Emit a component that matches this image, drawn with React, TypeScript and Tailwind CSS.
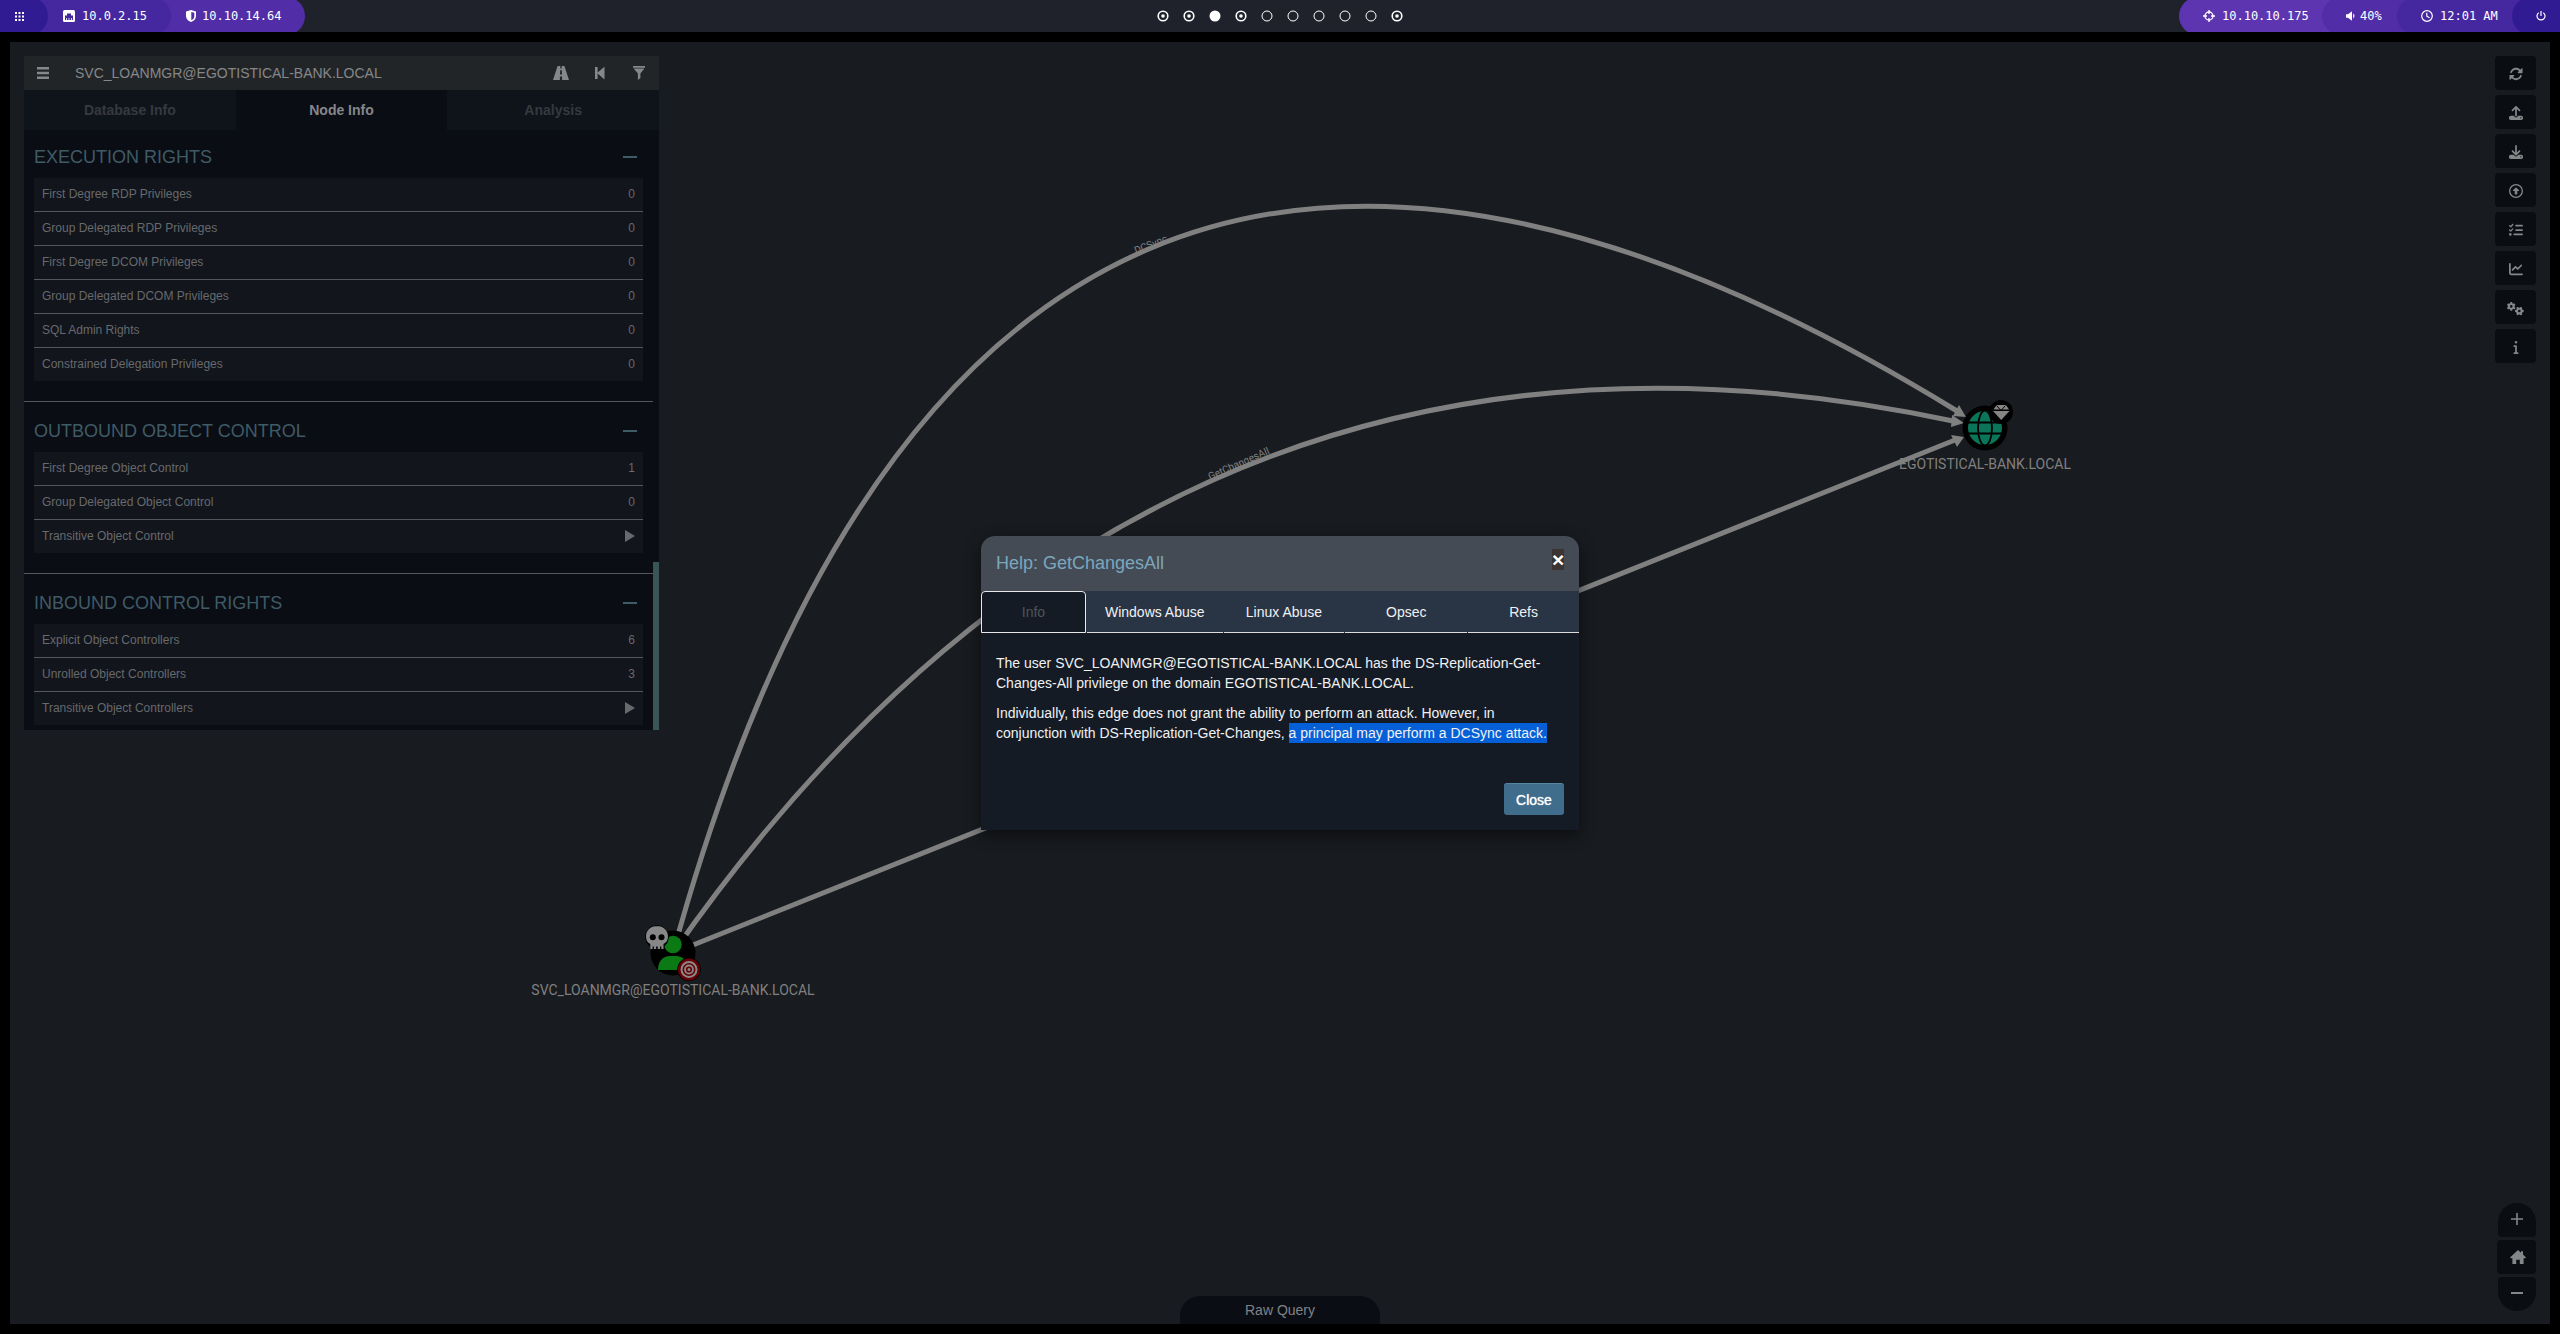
import React, { useState } from 'react';
import {
  FaRotate,
  FaUpload,
  FaDownload,
  FaRegCircleUp,
  FaListCheck,
  FaChartLine,
  FaGears,
  FaInfo,
} from 'react-icons/fa6';

/* ---------- icons ---------- */

const MenuIcon = () => (
  <svg className="h-3 w-3" viewBox="0 0 12 12" fill="currentColor" aria-hidden="true">
    <path d="M0 0h12v2.5H0zM0 4.8h12v2.5H0zM0 9.5h12V12H0z" />
  </svg>
);
const RoadIcon = () => (
  <svg className="h-3.5 w-4" viewBox="0 0 16 14" fill="currentColor" aria-hidden="true">
    <path d="M4.6 0H7.3V2.6H8.7V0H11.4L16 14H9.1V10.6H6.9V14H0ZM7.2 4.3 7 8.4H9L8.8 4.3Z" />
  </svg>
);
const StepBackIcon = () => (
  <svg className="h-3.5 w-2.5" viewBox="0 0 10 14" fill="currentColor" aria-hidden="true">
    <path d="M0 1h2.6v5.6L9.5 0.8v12.6L2.6 7.4V13H0z" />
  </svg>
);
const FilterIcon = () => (
  <svg className="h-3.5 w-3" viewBox="0 0 12 14" fill="currentColor" aria-hidden="true">
    <path d="M0 0h12v1.8H0zM0.6 2.4h10.8L7.4 7.4V12L4.9 14V7.4z" />
  </svg>
);
const HomeIcon = () => (
  <svg className="h-3.5 w-4" viewBox="0 0 16 14" fill="currentColor" aria-hidden="true">
    <path d="M8 0 11 2.7V1.2h2v3.3L16 7.4l-.8.9H13.6V14H9.8V9.8H6.2V14H2.4V8.3H.8L0 7.4Z" />
  </svg>
);
const EthernetIcon = () => (
  <svg className="h-3 w-3" viewBox="0 0 12 12" aria-hidden="true">
    <rect width="12" height="12" rx="1.5" fill="#fff" />
    <path d="M2 10V5.5h2V3.5h4v2h2V10H8.8V8H8v2H6.4V8h-.8v2H4V8h-.8v2z" fill="#4527a0" />
  </svg>
);
const ShieldIcon = () => (
  <svg className="h-3 w-2.5" viewBox="0 0 10 12" aria-hidden="true">
    <path d="M5 0 10 1.5V6c0 3-2 5-5 6-3-1-5-3-5-6V1.5z" fill="#fff" />
    <path d="M5.3 2 8.3 2.8V6c0 2-1 3.4-3 4.2z" fill="#512da8" />
  </svg>
);
const TargetIcon = () => (
  <svg className="h-3 w-3" viewBox="0 0 12 12" fill="none" stroke="#fff" strokeWidth="1.3" aria-hidden="true">
    <circle cx="6" cy="6" r="4" />
    <path d="M6 0v4M6 8v4M0 6h4M8 6h4" />
  </svg>
);
const VolumeIcon = () => (
  <svg className="h-2.5 w-2.5" viewBox="0 0 10 10" fill="#fff" aria-hidden="true">
    <path d="M0 3.2h2L6 .2v9.6L2 6.8H0zM7.2 2.6C9 3.6 9 6.4 7.2 7.4z" />
  </svg>
);
const ClockIcon = () => (
  <svg className="h-3 w-3" viewBox="0 0 12 12" fill="none" stroke="#fff" strokeWidth="1.2" aria-hidden="true">
    <circle cx="6" cy="6" r="5.3" />
    <path d="M5.8 2.8V6.2L8.6 7.8" />
  </svg>
);
const PowerIcon = () => (
  <svg className="h-2.5 w-2.5" viewBox="0 0 10 10" fill="none" stroke="#fff" strokeWidth="1.2" aria-hidden="true">
    <path d="M5 0v5M2.7 1.7a4 4 0 1 0 4.6 0" />
  </svg>
);
const GridIcon = () => (
  <svg className="h-[9px] w-[9px]" viewBox="0 0 9 9" fill="#fff" aria-hidden="true">
    {[0, 3.5, 7].map((y) => [0, 3.5, 7].map((x) => <rect key={`${x}-${y}`} x={x} y={y} width="2" height="2" />))}
  </svg>
);

/* ---------- status bar ---------- */

const workspaces = ['busy', 'busy', 'active', 'busy', 'empty', 'empty', 'empty', 'empty', 'empty', 'busy'];

function Workspace({ state, index }: { state: string; index: number }) {
  return (
    <button aria-label={`Workspace ${index + 1}`} className="grid h-[26px] w-[26px] place-items-center">
      <svg className="h-3 w-3" viewBox="0 0 12 12" fill="none" stroke="#fff" aria-hidden="true">
        {state === 'active' && <circle cx="6" cy="6" r="5.5" fill="#fff" stroke="none" />}
        {state === 'busy' && (
          <>
            <circle cx="6" cy="6" r="4.8" strokeWidth="1.6" />
            <circle cx="6" cy="6" r="1.8" fill="#fff" stroke="none" />
          </>
        )}
        {state === 'empty' && <circle cx="6" cy="6" r="5" strokeWidth="1" />}
      </svg>
    </button>
  );
}

function StatusBar() {
  return (
    <header className="grid h-8 grid-cols-[1fr_auto_1fr] grid-rows-[32px] items-center overflow-hidden bg-[#1f222b] font-['DejaVu_Sans_Mono',monospace] text-xs text-white">
      <div className="flex items-center">
        <div className="flex h-[38px] items-center rounded-r-[19px] bg-[#512da8]">
          <div className="flex h-[38px] items-center rounded-r-[19px] bg-[#4527a0]">
            <div className="flex h-[38px] w-12 items-center rounded-r-[19px] bg-[#311b92] pl-[15px]">
              <GridIcon />
            </div>
            <div className="flex w-[123px] items-center gap-[7px] pl-[15px]">
              <EthernetIcon />
              <span>10.0.2.15</span>
            </div>
          </div>
          <div className="flex w-[134px] items-center gap-1.5 pl-[15px]">
            <ShieldIcon />
            <span>10.10.14.64</span>
          </div>
        </div>
      </div>
      <nav aria-label="Workspaces" className="flex">
        {workspaces.map((s, i) => (
          <Workspace key={i} state={s} index={i} />
        ))}
      </nav>
      <div className="flex items-center justify-end">
        <div className="flex h-[38px] items-center rounded-l-[19px] bg-[#5e35b1]">
          <div className="flex w-[143px] items-center gap-[7px] pl-6">
            <TargetIcon />
            <span>10.10.10.175</span>
          </div>
          <div className="flex h-[38px] items-center rounded-l-[19px] bg-[#512da8]">
            <div className="flex w-[75px] items-center gap-1 pl-6">
              <VolumeIcon />
              <span>40%</span>
            </div>
            <div className="flex h-[38px] items-center rounded-l-[19px] bg-[#4527a0]">
              <div className="flex w-[115px] items-center gap-[7px] pl-6">
                <ClockIcon />
                <span>12:01 AM</span>
              </div>
              <div className="flex h-[38px] w-12 items-center rounded-l-[19px] bg-[#311b92] pl-6">
                <PowerIcon />
              </div>
            </div>
          </div>
        </div>
      </div>
    </header>
  );
}

/* ---------- graph ---------- */

function Graph() {
  return (
    <svg
      className="absolute inset-0 h-full w-full"
      viewBox="10 42 2540 1282"
      role="img"
      aria-label="Attack path graph"
      fontFamily="Roboto, sans-serif"
    >
      <g fill="#808284" fontSize="10">
        <text transform="translate(1136 254) rotate(-22)">DCSync</text>
        <text transform="translate(1210 480) rotate(-24)">GetChangesAll</text>
      </g>
      <g fill="none" stroke="#808080" strokeWidth="5">
        <path d="M673 953Q985 -185 1957 411" />
        <path d="M673 953Q1162 252 1953 421" />
        <path d="M673 953 1955 440" />
      </g>
      <g fill="#808080">
        <path d="M1959 405 1953 416 1966 417z" />
        <path d="M1952 415 1951 427 1964 423z" />
        <path d="M1951 435 1957 447 1964 437z" />
      </g>

      <g>
        <circle cx="673" cy="953" r="22.5" fill="#000" />
        <circle cx="673" cy="944.5" r="8.7" fill="#0c7a14" />
        <path d="M658 970c0-9 5-14 12-14h6c7 0 12 5 12 14z" fill="#0c7a14" />
        <circle cx="657" cy="937" r="11.8" fill="#000" />
        <path
          d="M657 926c-6.5 0-11 4.6-11 10.4 0 3.6 1.5 6.2 4.3 7.6V949h2.3v-2.5h1.3V949h2.2v-2.5h1.6V949h2.3v-2.5h1.3V949h2.2V944c2.9-1.4 4.5-4 4.5-7.6 0-5.8-4.5-10.4-11-10.4z"
          fill="#878787"
        />
        <circle cx="652.8" cy="937.3" r="3" fill="#000" />
        <circle cx="661.5" cy="937.3" r="3" fill="#000" />
        <circle cx="689" cy="969.5" r="11.8" fill="#000" />
        <circle cx="689" cy="969.5" r="11" fill="#640006" />
        <circle cx="689" cy="969.5" r="7.5" fill="none" stroke="#8c8888" strokeWidth="2" />
        <circle cx="689" cy="969.5" r="4" fill="none" stroke="#8c8888" strokeWidth="1.8" />
        <circle cx="689" cy="969.5" r="1.5" fill="#8c8888" />
        <text x="673" y="995" textAnchor="middle" fontSize="14" fill="#808080">
          SVC_LOANMGR@EGOTISTICAL-BANK.LOCAL
        </text>
      </g>

      <g>
        <circle cx="1985" cy="428" r="22.5" fill="#000" />
        <circle cx="1985" cy="428" r="17" fill="#0b755a" />
        <g fill="none" stroke="#000" strokeWidth="1.8">
          <ellipse cx="1985" cy="428" rx="7" ry="17.5" />
          <path d="M1967 422.5h36M1967 433.5h36" />
        </g>
        <circle cx="2001" cy="412" r="12" fill="#000" />
        <path d="M1996.5 405h9.5l3 4.5h-15.5zM1993 411h16.5l-8.3 9z" fill="#858585" />
        <path d="M1996.5 405.5 2001 410.5 2005.5 405.5" fill="none" stroke="#000" strokeWidth="1" />
        <text x="1985" y="469" textAnchor="middle" fontSize="14" fill="#808080">
          EGOTISTICAL-BANK.LOCAL
        </text>
      </g>
    </svg>
  );
}

/* ---------- left panel ---------- */

type Row = { label: string; value: string | null };
const sections: { title: string; rows: Row[] }[] = [
  {
    title: 'EXECUTION RIGHTS',
    rows: [
      { label: 'First Degree RDP Privileges', value: '0' },
      { label: 'Group Delegated RDP Privileges', value: '0' },
      { label: 'First Degree DCOM Privileges', value: '0' },
      { label: 'Group Delegated DCOM Privileges', value: '0' },
      { label: 'SQL Admin Rights', value: '0' },
      { label: 'Constrained Delegation Privileges', value: '0' },
    ],
  },
  {
    title: 'OUTBOUND OBJECT CONTROL',
    rows: [
      { label: 'First Degree Object Control', value: '1' },
      { label: 'Group Delegated Object Control', value: '0' },
      { label: 'Transitive Object Control', value: null },
    ],
  },
  {
    title: 'INBOUND CONTROL RIGHTS',
    rows: [
      { label: 'Explicit Object Controllers', value: '6' },
      { label: 'Unrolled Object Controllers', value: '3' },
      { label: 'Transitive Object Controllers', value: null },
    ],
  },
];

function Section({ title, rows }: { title: string; rows: Row[] }) {
  return (
    <section className="border-b border-[#55585a] px-2.5 pb-5 last:border-b-0 last:pb-[5px]">
      <div className="flex h-[50px] items-center justify-between pr-1.5 pt-2">
        <h2 className="text-lg leading-5 text-[#3f5b66]">{title}</h2>
        <button aria-label={`Collapse ${title}`} className="grid h-5 w-3.5 place-items-center">
          <span className="h-0.5 w-3.5 bg-[#3f5b66]" />
        </button>
      </div>
      <table className="w-full border-separate border-spacing-0 text-xs text-[#67696c]">
        <tbody>
          {rows.map((r) => (
            <tr
              key={r.label}
              className="h-[34px] bg-[#12151c] last:h-[33px] [&:not(:last-child)>td]:border-b [&:not(:last-child)>td]:border-[#55585a]"
            >
              <td className="p-0 pb-0.5 pl-2">{r.label}</td>
              <td className="p-0 pb-0.5 pr-2 text-right">
                {r.value ?? (
                  <button aria-label={`Run ${r.label}`} className="ml-auto block">
                    <svg className="h-3 w-2.5" viewBox="0 0 10 12" fill="#67696c" aria-hidden="true">
                      <path d="M0 0 10 6 0 12z" />
                    </svg>
                  </button>
                )}
              </td>
            </tr>
          ))}
        </tbody>
      </table>
    </section>
  );
}

function SidePanel() {
  const tabs = ['Database Info', 'Node Info', 'Analysis'];
  const [tab, setTab] = useState('Node Info');
  return (
    <aside className="relative w-[calc(25%+7px)] self-start bg-[#0a0d14]">
      <div className="flex h-[34px] items-center bg-[#222527] text-[#85878a]">
        <button aria-label="Menu" className="ml-[13px]">
          <MenuIcon />
        </button>
        <input
          aria-label="Search for a node"
          defaultValue="SVC_LOANMGR@EGOTISTICAL-BANK.LOCAL"
          className="ml-[26px] h-full min-w-0 flex-1 bg-transparent text-sm outline-none"
        />
        <div className="flex items-center pr-3.5">
          <button aria-label="Pathfinding" className="mr-[26px]">
            <RoadIcon />
          </button>
          <button aria-label="Back" className="mr-7">
            <StepBackIcon />
          </button>
          <button aria-label="Filter">
            <FilterIcon />
          </button>
        </div>
      </div>
      <div role="tablist" className="grid h-10 grid-cols-3">
        {tabs.map((t) => (
          <button
            key={t}
            role="tab"
            aria-selected={t === tab}
            onClick={() => setTab(t)}
            className={
              t === tab
                ? 'text-sm font-bold text-[#85878a]'
                : 'bg-[#0f141b] text-sm font-bold text-[#36393e]'
            }
          >
            {t}
          </button>
        ))}
      </div>
      <div className="-mt-0.5 mr-1.5">
        {sections.map((s) => (
          <Section key={s.title} {...s} />
        ))}
      </div>
      <div className="absolute bottom-0 right-0 h-1/4 w-1.5 bg-[#3a5558]" />
    </aside>
  );
}

/* ---------- right toolbar ---------- */

const tools = [
  { name: 'Refresh', icon: <FaRotate size={14} /> },
  { name: 'Export graph', icon: <FaUpload size={14} /> },
  { name: 'Import graph', icon: <FaDownload size={14} /> },
  { name: 'Upload data', icon: <FaRegCircleUp size={14} /> },
  { name: 'View upload status', icon: <FaListCheck size={14} /> },
  { name: 'Change layout', icon: <FaChartLine size={14} /> },
  { name: 'Settings', icon: <FaGears size={17} /> },
  { name: 'About', icon: <FaInfo size={14} /> },
];

function Toolbar() {
  return (
    <div className="flex flex-col gap-[5px]">
      {tools.map((t) => (
        <button
          key={t.name}
          aria-label={t.name}
          className="grid h-[34px] w-[41px] place-items-center rounded bg-[#0a0d12] pt-0.5 text-[#858687]"
        >
          {t.icon}
        </button>
      ))}
    </div>
  );
}

function ZoomControls() {
  return (
    <div className="mt-auto flex flex-col items-end gap-[3px] self-end text-[#858687]">
      <button
        aria-label="Zoom in"
        className="grid h-[34px] w-[38px] place-items-center rounded-b-sm rounded-t-[19px] bg-[#0a0d12] pb-0.5"
      >
        <svg className="h-3 w-3" viewBox="0 0 12 12" fill="currentColor" aria-hidden="true">
          <path d="M5.2 0h1.6v5.2H12v1.6H6.8V12H5.2V6.8H0V5.2h5.2z" />
        </svg>
      </button>
      <button aria-label="Reset zoom" className="grid h-[34px] w-[39px] place-items-center rounded bg-[#0a0d12] pl-0.5">
        <HomeIcon />
      </button>
      <button
        aria-label="Zoom out"
        className="grid h-[34px] w-[38px] place-items-center rounded-b-[19px] rounded-t-sm bg-[#0a0d12] pb-0.5"
      >
        <span className="h-0.5 w-3 bg-current" />
      </button>
    </div>
  );
}

/* ---------- help dialog ---------- */

const helpTabs = [
  { name: 'Info', grow: 'grow-[104]' },
  { name: 'Windows Abuse', grow: 'grow-[137]' },
  { name: 'Linux Abuse', grow: 'grow-[122]' },
  { name: 'Opsec', grow: 'grow-[123]' },
  { name: 'Refs', grow: 'grow-[112]' },
];

function HelpDialog() {
  const [tab, setTab] = useState('Info');
  return (
    <div
      role="dialog"
      aria-labelledby="help-title"
      className="absolute left-1/2 top-1/2 w-[598px] -translate-x-1/2 -translate-y-1/2 rounded-t-[14px] bg-[#141b25] text-sm leading-5 text-[#f0f1f2] shadow-[0_5px_15px_rgba(0,0,0,0.5)]"
    >
      <div className="flex h-[55px] items-start justify-between rounded-t-[14px] bg-[#454b54] px-[15px] pt-[13px]">
        <h2 id="help-title" className="pt-0.5 text-lg leading-6 text-[#7ba7bd]">
          Help: GetChangesAll
        </h2>
        <button
          aria-label="Close dialog"
          className="h-[21px] w-3 bg-[#3a3433] text-[21px] font-bold leading-[21px] text-white"
        >
          ×
        </button>
      </div>
      <div role="tablist" className="flex h-[42px] bg-[#293445]">
        {helpTabs.map((t) => (
          <button
            key={t.name}
            role="tab"
            aria-selected={t.name === tab}
            onClick={() => setTab(t.name)}
            className={`${t.grow} basis-0 ${
              t.name === tab
                ? 'rounded-t border border-[#e8e8e8] bg-[#141b25] text-[#505357]'
                : 'ml-px border-b border-[#dddddd]'
            }`}
          >
            {t.name}
          </button>
        ))}
      </div>
      <div className="px-[15px] pb-10 pt-5">
        <p>
          The user SVC_LOANMGR@EGOTISTICAL-BANK.LOCAL has the DS-Replication-Get-Changes-All privilege on the domain
          EGOTISTICAL-BANK.LOCAL.
        </p>
        <p className="mt-2.5">
          Individually, this edge does not grant the ability to perform an attack. However, in conjunction with
          DS-Replication-Get-Changes,{' '}
          <mark className="inline-block bg-[#0560d8] text-inherit">a principal may perform a DCSync attack.</mark>
        </p>
      </div>
      <div className="flex justify-end px-[15px] pb-[15px]">
        <button className="h-8 w-[60px] rounded-[3px] border-t border-[#5586a0] bg-[#3f6d8b] text-sm text-white [text-shadow:0_0_1px_#fff]">
          Close
        </button>
      </div>
    </div>
  );
}

export default function App() {
  return (
    <div className="flex min-h-screen flex-col bg-black font-['Liberation_Sans',Arial,sans-serif]">
      <StatusBar />
      <main className="relative m-2.5 flex flex-1 justify-between bg-[#181b1f] p-3.5">
        <Graph />
        <SidePanel />
        <div className="relative -mb-px flex flex-col">
          <Toolbar />
          <ZoomControls />
        </div>
        <button className="absolute bottom-0 left-1/2 h-7 w-[200px] -translate-x-1/2 rounded-t-[20px] bg-[#0a0d14] text-sm text-[#808285]">
          Raw Query
        </button>
        <HelpDialog />
      </main>
    </div>
  );
}
